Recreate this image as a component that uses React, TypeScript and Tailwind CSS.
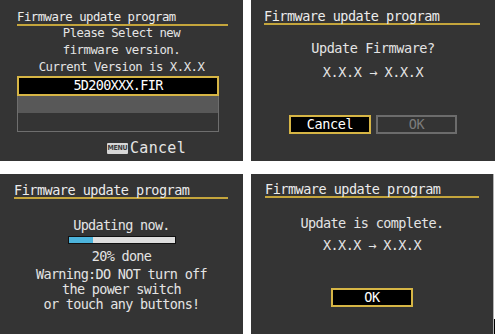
import React from "react";

const mono = "font-['DejaVu_Sans_Mono','Liberation_Mono',monospace]";

function Title({ width, padTop, padLeft }: { width: string; padTop: string; padLeft: string }) {
  return (
    <div className={`${padTop} ${padLeft}`}>
      <div
        className={`${width} border-b-2 border-[#c4a53c] text-[13.5px] leading-[14px] tracking-[-0.5px] text-[#ececec] whitespace-nowrap`}
      >
        Firmware update program
      </div>
    </div>
  );
}

function SelectPanel() {
  return (
    <div className="h-[161px] w-[243px] bg-[#343434] text-[#e4e4e4]">
      <div className="pl-[17px] pt-[11px]">
        <div className="w-[211px] whitespace-nowrap border-b-2 border-[#c4a53c] text-[12.3px] leading-[13px] tracking-[-0.5px] text-[#ececec]">
          Firmware update program
        </div>
      </div>
      <div className="-mt-[1px] text-center text-[12.3px] leading-[17px] tracking-[-0.5px]">
        <div>Please Select new</div>
        <div>firmware version.</div>
        <div>Current Version is X.X.X</div>
      </div>
      <div className="ml-[17px] w-[202px]">
        <div className="flex h-[20px] items-center justify-center border-2 border-[#d6b545] bg-black text-[13.5px] leading-none tracking-[-0.7px] text-white">
          5D200XXX.FIR
        </div>
        <div className="border-x border-b border-[#6e6e6e]">
          <div className="h-[17px] bg-[#585858]" />
          <div className="h-[18px]" />
        </div>
      </div>
      <div className="mt-[9px] flex items-center pl-[107px]">
        <span className="flex h-[11px] w-[21px] items-center justify-center rounded-[1px] bg-[#d6d6d6] font-['DejaVu_Sans_Condensed','DejaVu_Sans',sans-serif] text-[7px] font-bold leading-none tracking-[-0.3px] text-[#3a3a3a]">
          MENU
        </span>
        <span className="ml-[2px] text-[15px] leading-[14px] tracking-[0.3px]">Cancel</span>
      </div>
    </div>
  );
}

function ConfirmPanel() {
  return (
    <div className="h-[161px] w-[244px] bg-[#343434] text-[#e4e4e4]">
      <Title width="w-[216px]" padTop="pt-[9px]" padLeft="pl-[13px]" />
      <div className="mt-[11px] text-center text-[13.5px] leading-[24px] tracking-[-0.4px]">
        <div>Update Firmware?</div>
        <div>X.X.X → X.X.X</div>
      </div>
      <div className="mt-[31px] flex justify-center gap-[5px] text-[13.5px] tracking-[-0.4px]">
        <div className="flex h-[19px] w-[82px] items-center justify-center border-2 border-[#d6b545] bg-black text-white">
          Cancel
        </div>
        <div className="flex h-[19px] w-[81px] items-center justify-center border-2 border-[#6c6c6c] text-[#7c7c7c]">
          OK
        </div>
      </div>
    </div>
  );
}

function ProgressPanel() {
  return (
    <div className="h-[160px] w-[243px] bg-[#343434] text-[#e4e4e4]">
      <Title width="w-[214px]" padTop="pt-[9px]" padLeft="pl-[14px]" />
      <div className="mt-[19px] text-center text-[13.5px] leading-[15px] tracking-[-0.7px]">
        Updating now.
      </div>
      <div className="ml-[68px] mt-[3px] flex h-[8px] w-[108px] border border-[#111] bg-[#dedede]">
        <div className="h-full w-[24px] bg-[#4db4dc]" />
      </div>
      <div className="mt-[5px] text-center text-[13.5px] leading-[15px] tracking-[-0.7px]">20% done</div>
      <div className="mt-[3px] text-center text-[13.5px] leading-[15px] tracking-[-0.7px]">
        <div>Warning:DO NOT turn off</div>
        <div>the power switch</div>
        <div>or touch any buttons!</div>
      </div>
    </div>
  );
}

function CompletePanel() {
  return (
    <div className="flex h-[160px] w-[244px]">
      <div className="h-full w-[242px] bg-[#343434] text-[#e4e4e4]">
        <Title width="w-[214px]" padTop="pt-[8px]" padLeft="pl-[14px]" />
        <div className="mt-[14px] text-center text-[13.5px] leading-[22px] tracking-[-0.6px]">
          <div>Update is complete.</div>
          <div>X.X.X → X.X.X</div>
        </div>
        <div className="mt-[32px] flex justify-center text-[13.5px] tracking-[-0.4px]">
          <div className="flex h-[19px] w-[82px] items-center justify-center border-2 border-[#d6b545] bg-black text-white">
            OK
          </div>
        </div>
      </div>
      <div className="h-full w-[1px] bg-[#b4b4b4]" />
      <div className="flex h-full w-[1px] flex-col justify-end">
        <div className="h-[15px] bg-black" />
      </div>
    </div>
  );
}

export default function App() {
  return (
    <div
      className={`${mono} grid h-[334px] w-[495px] grid-cols-[243px_244px] grid-rows-[161px_160px] gap-x-[8px] gap-y-[13px] bg-white`}
    >
      <SelectPanel />
      <ConfirmPanel />
      <ProgressPanel />
      <CompletePanel />
    </div>
  );
}
